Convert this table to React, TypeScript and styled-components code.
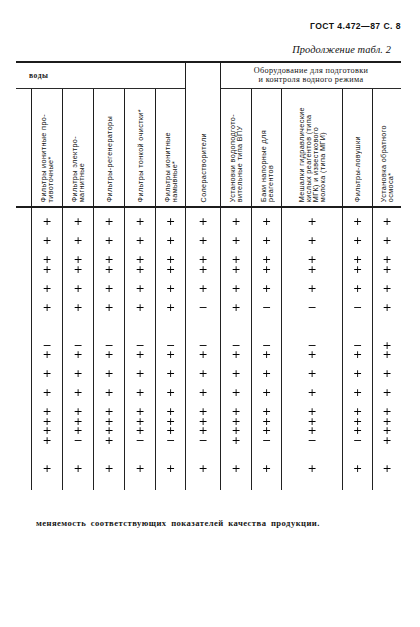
import React from "react";
import styled, { createGlobalStyle } from "styled-components";

const GlobalStyle = createGlobalStyle`
  html, body { margin: 0; padding: 0; background: #ffffff; }
  body { font-family: "Liberation Serif", serif; color: #141414; }
`;

const COLS = [15, 31, 31, 31, 31, 30, 35, 31, 30, 61, 30, 29];
const TEMPLATE = COLS.map((w) => `${w}px`).join(" ");
const SLOT = 9.5;
const ROW_SLOTS = [2, 2, 3, 2, 4, 3, 2, 2, 6, 2];

const HEADERS: React.ReactNode[] = [
  null,
  <>Фильтры ионитные про-<br />тивоточные*</>,
  <>Фильтры электро-<br />магнитные</>,
  <>Фильтры-регенераторы</>,
  <>Фильтры тонкой очистки*</>,
  <>Фильтры ионитные<br />намывные*</>,
  <>Солерастворители</>,
  <>Установки водоподгото-<br />вительные типа ВПУ</>,
  <>Баки напорные для<br />реагентов</>,
  <>Мешалки гидравлические<br />кислых реагентов (типа<br />МГК) и известкового<br />молока (типа МГИ)</>,
  <>Фильтры-ловушки</>,
  <>Установка обратного<br />осмоса*</>,
];

const DATA: string[][] = [
  [],
  ["+", "+", "++", "+", "+", "-+", "+", "+", "++++", "+"],
  ["+", "+", "++", "+", "+", "-+", "+", "+", "+++-", "+"],
  ["+", "+", "++", "+", "+", "-+", "+", "+", "++++", "+"],
  ["+", "+", "++", "+", "+", "-+", "+", "+", "+++-", "+"],
  ["+", "+", "++", "+", "+", "-+", "+", "+", "+++-", "+"],
  ["+", "+", "++", "+", "-", "-+", "+", "+", "+++-", "+"],
  ["+", "+", "++", "+", "+", "-+", "+", "+", "++++", "+"],
  ["+", "+", "++", "+", "-", "-+", "+", "+", "+++-", "+"],
  ["+", "+", "++", "+", "-", "-+", "+", "+", "+++-", "+"],
  ["+", "+", "++", "+", "-", "-+", "+", "+", "+++-", "+"],
  ["+", "+", "++", "+", "+", "++", "+", "+", "++++", "+"],
];

const Page = styled.div`
  width: 420px;
  height: 627px;
  box-sizing: border-box;
  padding: 19px 19px 0 16px;
  display: flex;
  flex-direction: column;
  background: #fff;
  overflow: hidden;
`;

const DocCode = styled.div`
  align-self: flex-end;
  margin-top: 1px;
  font-family: "Liberation Sans", Arial, sans-serif;
  font-weight: 700;
  font-size: 8.6px;
  letter-spacing: 0.45px;
  line-height: 12px;
  color: #111;
`;

const Continuation = styled.div`
  align-self: flex-end;
  margin: 11px 10px 0 0;
  font-family: "Liberation Serif", serif;
  font-style: italic;
  font-size: 10.4px;
  letter-spacing: 0.1px;
  line-height: 13px;
  color: #111;
`;

const HeadGrid = styled.div`
  margin-top: 5px;
  display: grid;
  grid-template-columns: ${TEMPLATE};
  grid-template-rows: 26px 117px;
  border-top: 2px solid #1c1c1c;
  border-bottom: 2px solid #1c1c1c;
`;

const WaterCell = styled.div`
  grid-column: 1 / 7;
  grid-row: 1;
  border-bottom: 1px solid #2a2a2a;
  display: flex;
  align-items: center;
  padding-left: 13px;
  font-family: "Liberation Serif", serif;
  font-weight: 700;
  font-size: 7.6px;
  letter-spacing: 0.5px;
  color: #1a1a1a;
`;

const EquipCell = styled.div`
  grid-column: 8 / 13;
  grid-row: 1;
  border-left: 1px solid #1e1e1e;
  border-bottom: 1px solid #2a2a2a;
  display: flex;
  align-items: center;
  justify-content: center;
  text-align: center;
  padding-bottom: 1px;
  font-family: "Liberation Serif", serif;
  font-size: 8.2px;
  letter-spacing: 0.35px;
  line-height: 9px;
  color: #151515;
`;

const VHead = styled.div<{ $col: number; $tall?: boolean }>`
  grid-column: ${(p) => p.$col + 1};
  grid-row: ${(p) => (p.$tall ? "1 / 3" : "2")};
  border-left: ${(p) => (p.$col === 0 ? "none" : "1px solid #1e1e1e")};
  display: flex;
  justify-content: center;
  align-items: flex-end;
  padding-bottom: 4px;
  overflow: hidden;
`;

const VText = styled.div`
  writing-mode: vertical-rl;
  transform: rotate(180deg);
  text-align: left;
  font-family: "Liberation Sans", Arial, sans-serif;
  font-size: 7.2px;
  letter-spacing: 0.4px;
  line-height: 7px;
  color: #111;
  white-space: nowrap;
`;

const BodyGrid = styled.div`
  display: grid;
  grid-template-columns: ${TEMPLATE};
  height: 282px;
  will-change: transform;
`;

const BodyCol = styled.div<{ $first?: boolean }>`
  border-left: ${(p) => (p.$first ? "none" : "1px solid #222")};
  padding-top: 9px;
  display: flex;
  flex-direction: column;
`;

const Cell = styled.div<{ $slots: number }>`
  height: ${(p) => p.$slots * SLOT}px;
  white-space: pre-line;
  text-align: center;
  line-height: ${SLOT}px;
  font-family: "DejaVu Sans", sans-serif;
  font-size: 11px;
  color: #000;
`;

const Footnote = styled.p`
  margin: 28px 0 0 20px;
  font-family: "Liberation Serif", serif;
  font-weight: 700;
  font-size: 8.6px;
  letter-spacing: 0.45px;
  word-spacing: 2px;
  line-height: 11px;
  color: #161616;
`;

export default function App() {
  return (
    <>
      <GlobalStyle />
      <Page>
        <DocCode>ГОСТ 4.472—87 С. 8</DocCode>
        <Continuation>Продолжение табл. 2</Continuation>
        <HeadGrid>
          <WaterCell>воды</WaterCell>
          <EquipCell>
            Оборудование для подготовки
            <br />
            и контроля водного режима
          </EquipCell>
          {HEADERS.map((h, i) => (
            <VHead key={i} $col={i} $tall={i === 6}>
              {h && <VText>{h}</VText>}
            </VHead>
          ))}
        </HeadGrid>
        <BodyGrid>
          {DATA.map((col, ci) => (
            <BodyCol key={ci} $first={ci === 0}>
              {ci > 0 &&
                ROW_SLOTS.map((s, ri) => (
                  <Cell key={ri} $slots={s}>
                    {col[ri]
                      .split("")
                      .map((m) => (m === "-" ? "−" : "+"))
                      .join("\n")}
                  </Cell>
                ))}
            </BodyCol>
          ))}
        </BodyGrid>
        <Footnote>меняемость соответствующих показателей качества продукции.</Footnote>
      </Page>
    </>
  );
}
